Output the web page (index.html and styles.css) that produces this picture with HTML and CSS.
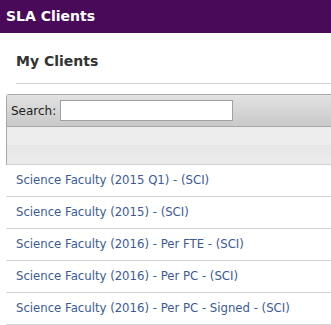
FILE: index.html
```html
<!DOCTYPE html>
<html lang="en">
<head>
    <meta charset="UTF-8">
    <title>SLA Clients</title>
    <link rel="stylesheet" href="styles.css">
</head>
<body>
    <div class="topbar">SLA Clients</div>

    <div class="page">
        <h2 class="title">My Clients</h2>
    </div>

    <div class="grid">
        <div class="toolbar">
            <label>Search:</label>
            <input type="text" class="search">
        </div>
        <div class="grid-head"></div>
    </div>

    <ul class="clients">
        <li><a href="#">Science Faculty (2015 Q1) - (SCI)</a></li>
        <li><a href="#">Science Faculty (2015) - (SCI)</a></li>
        <li><a href="#">Science Faculty (2016) - Per FTE - (SCI)</a></li>
        <li><a href="#">Science Faculty (2016) - Per PC - (SCI)</a></li>
        <li><a href="#">Science Faculty (2016) - Per PC - Signed - (SCI)</a></li>
    </ul>
</body>
</html>
```

FILE: styles.css
```css
body {
    margin: 0;
    font-family: "DejaVu Sans", Verdana, sans-serif;
    background: #ffffff;
    color: #333333;
    overflow: hidden;
}
.topbar {
    height: 33px;
    line-height: 32px;
    padding-left: 6px;
    background-color: #4a0a5a;
    color: #ffffff;
    font-size: 14px;
    font-weight: bold;
}
.page {
    padding: 0 0 0 16px;
}
.title {
    margin: 0;
    padding: 20px 0 13px;
    font-size: 14px;
    line-height: 17px;
    color: #333333;
    border-bottom: 1px solid #d6d6d6;
}
.grid {
    margin: 10px 0 0 6px;
    border: 1px solid #a8a8a8;
    border-right: none;
    border-bottom: none;
    border-radius: 3px 0 0 0;
}
.toolbar {
    display: flex;
    align-items: center;
    height: 31px;
    padding-left: 4px;
    background: linear-gradient(#e2e2e2, #c9c9c9);
    border-bottom: 1px solid #a8a8a8;
    font-size: 12px;
    color: #222222;
}
.toolbar label {
    margin-right: 4px;
}
.search {
    width: 171px;
    height: 19px;
    padding: 0;
    border: 1px solid #a0a0a0;
    background: #ffffff;
}
.grid-head {
    height: 37px;
    background: linear-gradient(#ededed 50%, #e6e6e6 50%, #ececec);
    border-bottom: 1px solid #d0d0d0;
}
.clients {
    list-style: none;
    margin: 0;
    padding: 0;
}
.clients li {
    height: 31px;
    line-height: 31px;
    margin-left: 6px;
    padding-left: 10px;
    border-bottom: 1px solid #d6d6d6;
    font-size: 11.7px;
}
.clients a {
    color: #3c5a96;
    text-decoration: none;
}
```
